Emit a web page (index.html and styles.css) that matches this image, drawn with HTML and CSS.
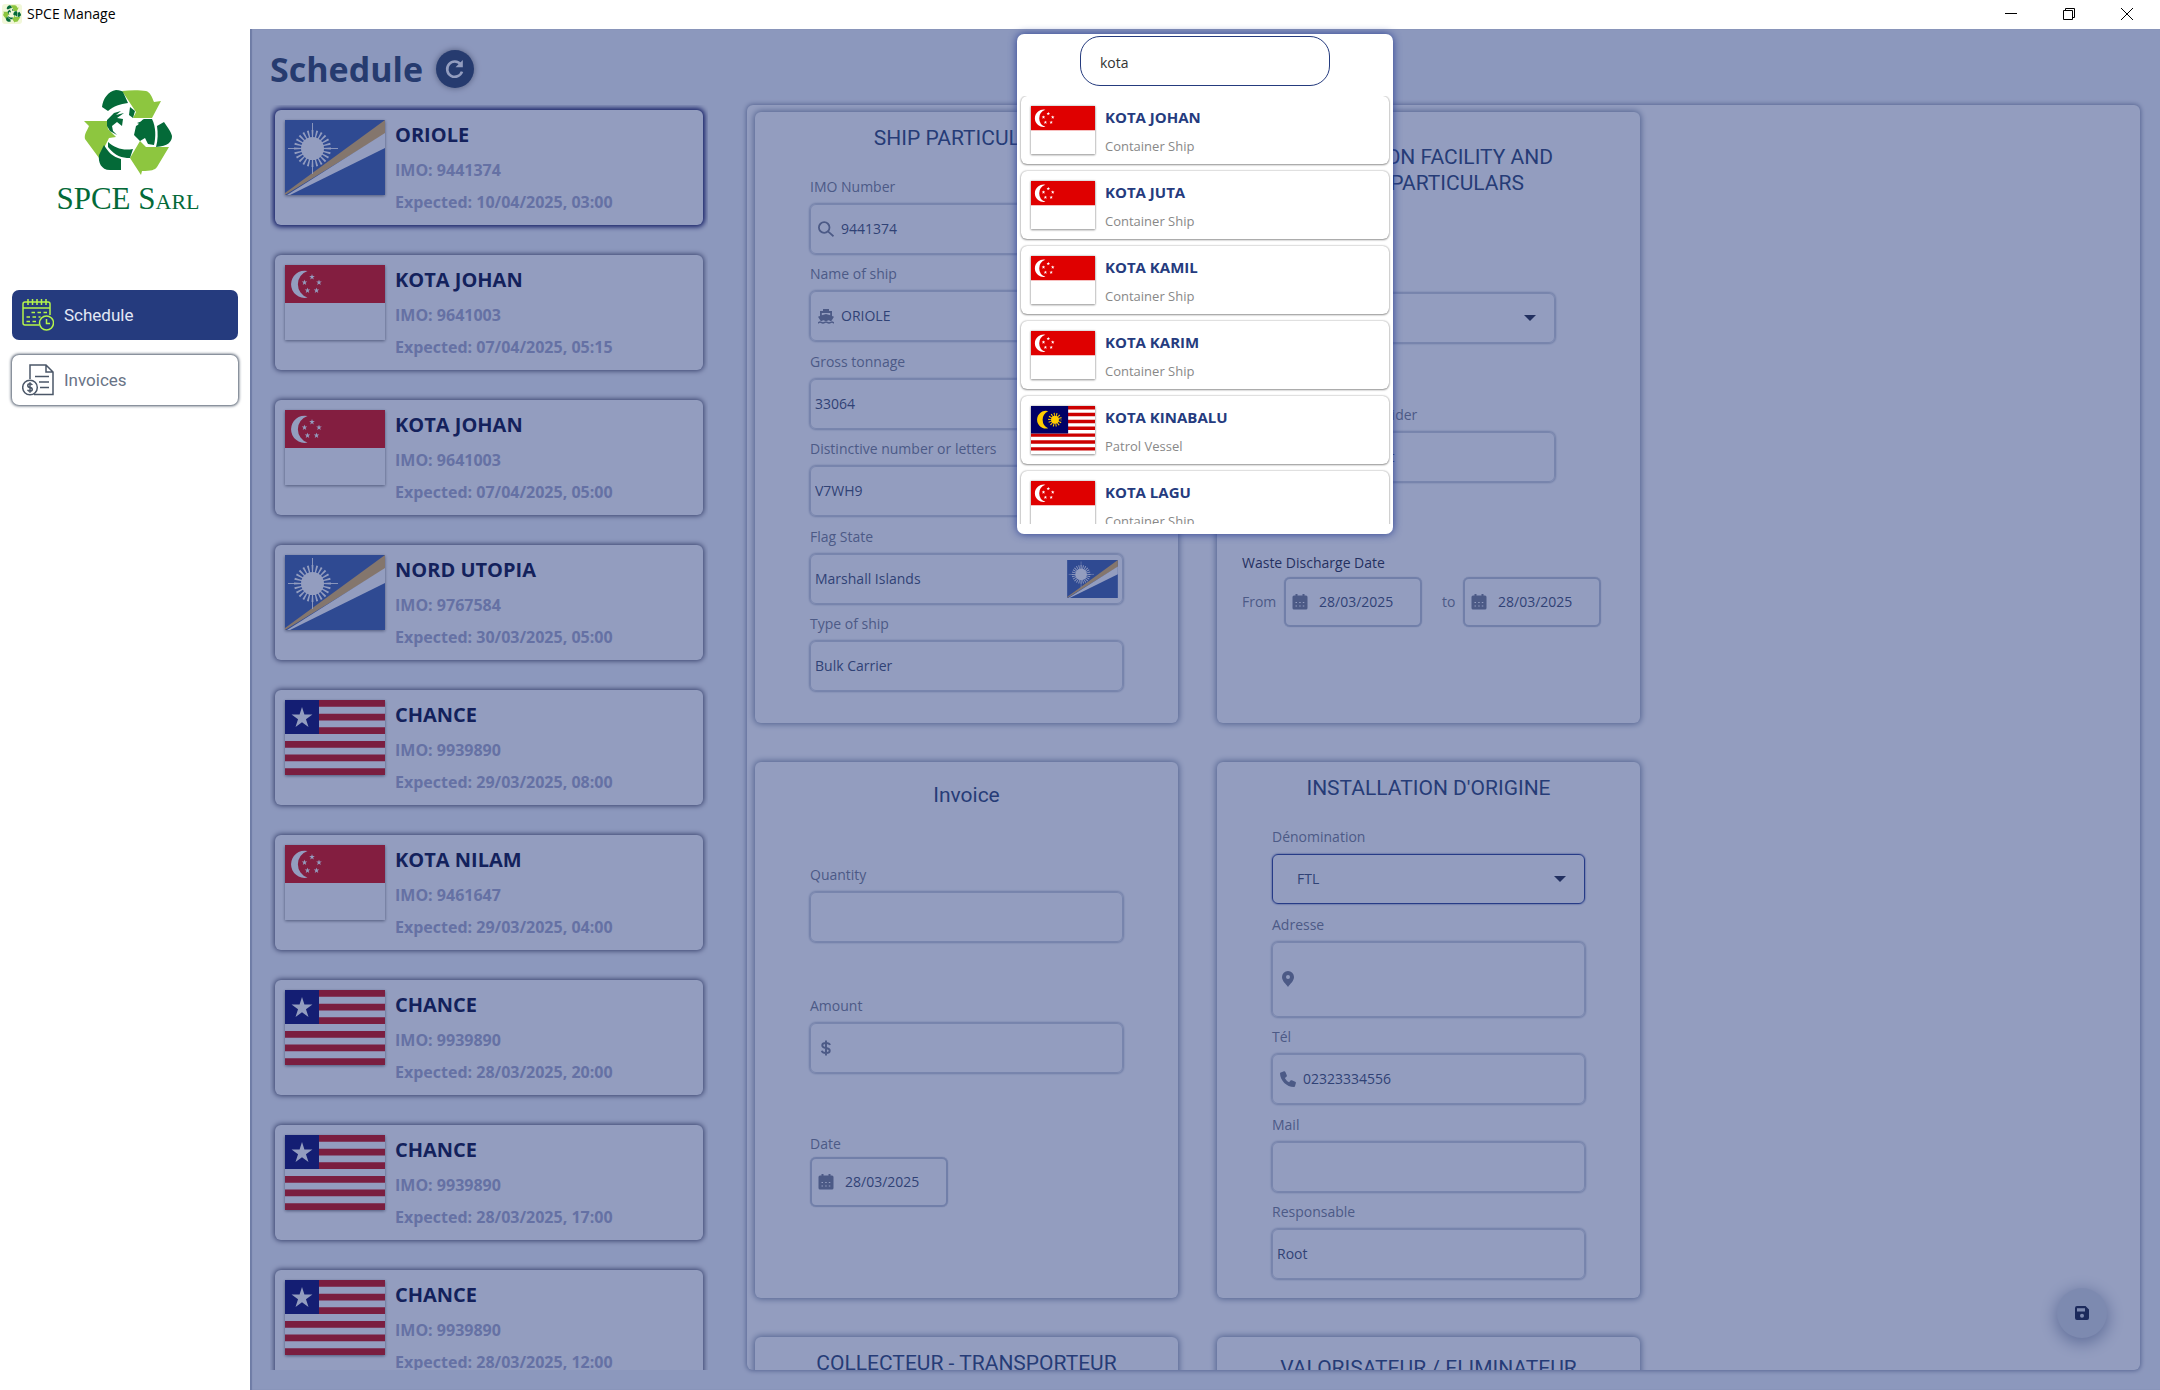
FILE: index.html
```html
<!DOCTYPE html>
<html lang="en">
<head>
<meta charset="utf-8">
<title>SPCE Manage</title>
<link rel="stylesheet" href="styles.css">
</head>
<body>
<svg class="defs" aria-hidden="true">
  <symbol id="star" viewBox="-10 -10 20 20"><path d="M0-10 2.2-3.1 9.5-3.1 3.6 1.2 5.9 8.1 0 3.8-5.9 8.1-3.6 1.2-9.5-3.1-2.2-3.1z"/></symbol>
  <symbol id="flag-sg" viewBox="0 0 100 75">
    <path fill="#fff" d="M0 0h100v75H0z"/><path fill="#df0000" d="M0 0h100v38H0z"/>
    <g fill="#fff"><path d="M22.500 6A13.600 13.600 0 1 0 22.500 32.600 14 14 0 0 1 22.500 6z"/>
    <use href="#star" x="24" y="9" width="6" height="6"/><use href="#star" x="16.500" y="14.500" width="6" height="6"/><use href="#star" x="31" y="14.500" width="6" height="6"/><use href="#star" x="19.500" y="22.500" width="6" height="6"/><use href="#star" x="28.500" y="22.500" width="6" height="6"/></g>
  </symbol>
  <symbol id="flag-mh" viewBox="0 0 100 75">
    <path fill="#3758a5" d="M0 0h100v75H0z"/><path fill="#e1b05b" d="M0 73 100 0v14L0 75z"/><path fill="#fff" d="M2 75 100 13v15L5 75z"/>
    <g fill="none" stroke="#fff"><circle cx="27.500" cy="28.500" r="14.500" stroke-width="8" pathLength="48" stroke-dasharray=".8 1.200" stroke-dashoffset=".4"/><path stroke-width=".9" d="M27.500 3v51M3 28.500h50"/></g><circle cx="27.500" cy="28.500" r="11.500" fill="#fff"/>
  </symbol>
  <symbol id="flag-lr" viewBox="0 0 100 75">
    <path fill="#fff" d="M0 0h100v75H0z"/><path stroke="#c00" stroke-width="6.820" d="M0 3.410h100M0 17.050h100M0 30.680h100M0 44.320h100M0 57.950h100M0 71.590h100"/><path fill="#006" d="M0 0h34v34H0z"/><use href="#star" fill="#fff" x="5" y="7" width="24" height="22"/>
  </symbol>
  <symbol id="flag-my" viewBox="0 0 112 84">
    <path fill="#fff" d="M0 0h112v84H0z"/><path stroke="#c00" stroke-width="6" d="M0 3h112M0 15h112M0 27h112M0 39h112M0 51h112M0 63h112M0 75h112"/><path fill="#006" d="M0 0h65v48H0z"/>
    <path fill="#fc0" d="M30 9a15.500 15.500 0 1 0 0 30 16.500 16.500 0 0 1 0-30z"/><circle cx="42" cy="24" r="7" fill="#fc0"/><circle cx="42" cy="24" r="9" fill="none" stroke="#fc0" stroke-width="6" pathLength="28" stroke-dasharray=".8 1.200" stroke-dashoffset=".4"/>
  </symbol>
  <symbol id="i-cal" viewBox="0 0 16 16"><path fill-rule="evenodd" d="M2 1.500h1.500V0h2v1.500h5V0h2v1.500H14A1.500 1.500 0 0 1 15.500 3v2H.5V3A1.500 1.500 0 0 1 2 1.500zM.5 5h15v9a1.500 1.500 0 0 1-1.500 1.500H2A1.500 1.500 0 0 1 .5 14zM3.500 8v1H5V8zm3.700 0v1h1.500V8zm3.600 0v1h1.500V8zm-7.300 3.500v1H5v-1zm3.700 0v1h1.500v-1zm3.600 0v1h1.500v-1z"/></symbol>
  <symbol id="logo" viewBox="0 0 88 85">
    <g fill="#8dc63f"><path d="M38 1C46 0 56 0 62 1c4 1 6 6 8 11l7-1-9 17H49l3-6z"/><path d="M56 51l6 6h23L73 77c-2 3-6 4-15 4l-1 4-11-17z"/><path d="M0 31h23l1 8 8 8-7 1-10 20L1 49c-1-5 2-8 4-13z"/></g>
    <g fill="#046a38"><path d="M18 17C19 9 24 1 32 0c4 0 6 1 7 2l5 11c-8 1-14 3-20 8z"/><path d="M73 36l7-4c3 5 7 9 8 14 0 6-4 10-16 11 2-7 2-14 1-21z"/><path d="M20 55c4 7 9 12 17 14v11H26c-9 0-12-8-11-15z"/><path d="M52 36c4-2 5-6 8-7h8c4 8 4 18 2 26l-6-1-3-6-5 3-6-6z"/><path d="M24 52c7 6 15 9 25 7l-3 9c-8 0-15-2-22-11z"/><path d="M23 30l7-7 7-2-5 4 8-2-7 5 6 1-1 7-5-4-5 4 1 5 4 4-7-4-3-5z"/><path d="M46 17l5 4-2 7-4-3zM53 33l8-3-3 5z"/></g>
  </symbol>
</svg>

<header class="titlebar">
  <svg class="app-icon" viewBox="0 0 20 20"><rect width="20" height="20" rx="3" fill="#f1f7d8"/><g transform="translate(1 1) scale(.2)"><use href="#logo" width="90" height="90"/></g></svg>
  <span class="app-title">SPCE Manage</span>
  <button class="win" aria-label="Minimize"><svg width="12" height="12"><path d="M0 5.500h12"/></svg></button>
  <button class="win" aria-label="Restore"><svg width="12" height="12"><path d="M.5 2.500h9v9h-9zM2.500 2.500v-2h9v9h-2"/></svg></button>
  <button class="win" aria-label="Close"><svg width="12" height="12"><path d="M0 0l12 12M12 0 0 12"/></svg></button>
</header>

<div class="app">
  <aside class="sidebar">
    <div class="brand"><svg class="brand-mark"><use href="#logo"/></svg><span class="brand-name">SPCE Sarl</span></div>
    <nav class="nav">
      <a class="nav-item active" href="#schedule">
        <svg viewBox="0 0 32 32" fill="none" stroke="#b5f54a" stroke-width="1.500"><path d="M17 26H3a2 2 0 0 1-2-2V5a2 2 0 0 1 2-2h23a2 2 0 0 1 2 2v11M1 9h27M6 0v6M10.500 0v6M15 0v6M19.500 0v6M24 0v6"/><path stroke-dasharray="3.500 2.500" d="M9.500 13.500h16M4.500 18h14M4.500 22.500h11"/><circle cx="24.500" cy="24" r="7"/><path d="M24.500 20v4.500H28"/></svg>
        Schedule</a>
      <a class="nav-item" href="#invoices">
        <svg viewBox="0 0 32 32" fill="none" stroke="#4b5768" stroke-width="1.500"><path d="M8 15V1h16l7 7v22.500H12M24 1v7h7M13 12.500h14M17 18h10M18 23.500h9"/><circle cx="8" cy="23.500" r="7.300"/><path d="M10.300 21c-.5-1-1.300-1.200-2.300-1.200-3 0-3 3.400 0 3.700s3 3.700 0 3.700c-1.200 0-2-.4-2.400-1.400M8 18.300v10.400"/></svg>
        Invoices</a>
    </nav>
  </aside>

  <main class="main">
    <div class="heading"><h1>Schedule</h1>
      <button class="refresh" aria-label="Refresh"><svg viewBox="0 0 20 20"><path d="M15.800 5.500A7.600 7.600 0 1 0 17 12.600" fill="none" stroke="#fff" stroke-width="2.600"/><path d="M17.800 1v7.300h-7.300z" fill="#fff"/></svg></button>
    </div>
    <div class="content">
      <section class="ships">
        <article class="ship selected"><svg class="flag"><use href="#flag-mh"/></svg><div><h2>ORIOLE</h2><p>IMO: 9441374</p><p>Expected: 10/04/2025, 03:00</p></div></article>
        <article class="ship"><svg class="flag"><use href="#flag-sg"/></svg><div><h2>KOTA JOHAN</h2><p>IMO: 9641003</p><p>Expected: 07/04/2025, 05:15</p></div></article>
        <article class="ship"><svg class="flag"><use href="#flag-sg"/></svg><div><h2>KOTA JOHAN</h2><p>IMO: 9641003</p><p>Expected: 07/04/2025, 05:00</p></div></article>
        <article class="ship"><svg class="flag"><use href="#flag-mh"/></svg><div><h2>NORD UTOPIA</h2><p>IMO: 9767584</p><p>Expected: 30/03/2025, 05:00</p></div></article>
        <article class="ship"><svg class="flag"><use href="#flag-lr"/></svg><div><h2>CHANCE</h2><p>IMO: 9939890</p><p>Expected: 29/03/2025, 08:00</p></div></article>
        <article class="ship"><svg class="flag"><use href="#flag-sg"/></svg><div><h2>KOTA NILAM</h2><p>IMO: 9461647</p><p>Expected: 29/03/2025, 04:00</p></div></article>
        <article class="ship"><svg class="flag"><use href="#flag-lr"/></svg><div><h2>CHANCE</h2><p>IMO: 9939890</p><p>Expected: 28/03/2025, 20:00</p></div></article>
        <article class="ship"><svg class="flag"><use href="#flag-lr"/></svg><div><h2>CHANCE</h2><p>IMO: 9939890</p><p>Expected: 28/03/2025, 17:00</p></div></article>
        <article class="ship"><svg class="flag"><use href="#flag-lr"/></svg><div><h2>CHANCE</h2><p>IMO: 9939890</p><p>Expected: 28/03/2025, 12:00</p></div></article>
      </section>

      <form class="panel">
        <section class="card tall">
          <h3>SHIP PARTICULARS</h3>
          <div class="fields">
            <div class="field"><label for="imo">IMO Number</label><div class="control icon"><svg viewBox="0 0 16 16"><path fill="none" stroke="currentColor" stroke-width="1.800" d="M11.500 6.500a5.300 5.300 0 1 1-10.600 0 5.300 5.300 0 0 1 10.600 0zM10 10.300l5.500 5"/></svg><input id="imo" value="9441374"></div></div>
            <div class="field"><label for="name">Name of ship</label><div class="control icon"><svg viewBox="1 0 16 16"><path d="M6 1h6v2h3v5l2 .8-2.500 4c-1 .6-2-.6-3-.6s-1.500.8-2.500.8-1.500-.8-2.500-.8-2 1.200-3 .6L1 8.800 3 8V3h3zM4.800 5v2.300L9 6l4.200 1.300V5z"/><path d="M0 15c2 0 2-1 3-1s1.500 1 3 1 2-1 3-1 1.500 1 3 1 2-1 3-1 1 1 3 1" fill="none" stroke="currentColor" stroke-width="1.300"/></svg><input id="name" value="ORIOLE"></div></div>
            <div class="field"><label for="gross">Gross tonnage</label><div class="control"><input id="gross" value="33064"></div></div>
            <div class="field"><label for="letters">Distinctive number or letters</label><div class="control"><input id="letters" value="V7WH9"></div></div>
            <div class="field"><label for="flag">Flag State</label><div class="control"><input id="flag" value="Marshall Islands"><svg class="flag-mini"><use href="#flag-mh"/></svg></div></div>
            <div class="field"><label for="type">Type of ship</label><div class="control"><input id="type" value="Bulk Carrier"></div></div>
          </div>
        </section>

        <section class="card facility">
          <h3>RECEPTION FACILITY AND PORT PARTICULARS</h3>
          <div class="fields">
            <div class="field"><label for="port">Location</label><div class="control select"><select id="port"><option>Port</option></select><svg class="caret" viewBox="0 0 12 6"><path d="M0 0h12L6 6z"/></svg></div></div>
            <div class="field"><label for="provider">Treatment Facility Provider</label><div class="control"><input id="provider" value="Waste treatment unit t"></div></div>
            <fieldset class="dates"><legend>Waste Discharge Date</legend>
              <div class="range">
                <label for="from">From</label><div class="control date"><svg><use href="#i-cal"/></svg><input id="from" value="28/03/2025"></div>
                <label class="to" for="to">to</label><div class="control date"><svg><use href="#i-cal"/></svg><input id="to" value="28/03/2025"></div>
              </div>
            </fieldset>
          </div>
        </section>

        <section class="card invoice">
          <h3>Invoice</h3>
          <div class="fields">
            <div class="field"><label for="qty">Quantity</label><div class="control"><input id="qty"></div></div>
            <div class="field"><label for="amount">Amount</label><div class="control icon"><svg viewBox="0 0 16 16"><path fill="none" stroke="currentColor" stroke-width="1.900" d="M12 5C11.500 3.500 10 3 8 3 3 3 3 7.300 8 8s5 5 0 5c-2 0-3.800-.5-4.200-2.300M8 .5v15"/></svg><input id="amount"></div></div>
            <div class="field date-field"><label for="idate">Date</label><div class="control date"><svg><use href="#i-cal"/></svg><input id="idate" value="28/03/2025"></div></div>
          </div>
        </section>

        <section class="card origin">
          <h3>INSTALLATION D'ORIGINE</h3>
          <div class="fields">
            <div class="field"><label for="denom">Dénomination</label><div class="control select focus"><select id="denom"><option>FTL</option></select><svg class="caret" viewBox="0 0 12 6"><path d="M0 0h12L6 6z"/></svg></div></div>
            <div class="field"><label for="addr">Adresse</label><div class="control icon area"><svg viewBox="0 0 16 16"><path fill-rule="evenodd" d="M8 0a6 6 0 0 1 6 6c0 4-4 7-6 10-2-3-6-6-6-10a6 6 0 0 1 6-6zm0 4a2 2 0 1 0 0 4 2 2 0 0 0 0-4z"/></svg><textarea id="addr" rows="1"></textarea></div></div>
            <div class="field"><label for="tel">Tél</label><div class="control icon"><svg viewBox="0 0 16 16"><path d="M.8 1.500 4 .3c.6-.2 1.200.1 1.400.6l1.400 3.400c.2.500.1 1-.3 1.400L4.900 7.100c1 2 2.200 3.200 4.200 4.200l1.400-1.700c.4-.4.9-.5 1.400-.3l3.300 1.400c.6.200.8.800.7 1.400L15 15.300c-.1.400-.5.700-1 .7C6.500 15.800.2 9.500 0 2.400c0-.4.300-.8.800-.9z"/></svg><input id="tel" value="02323334556"></div></div>
            <div class="field"><label for="mail">Mail</label><div class="control"><input id="mail"></div></div>
            <div class="field"><label for="resp">Responsable</label><div class="control"><input id="resp" value="Root"></div></div>
          </div>
        </section>

        <section class="card"><h3>COLLECTEUR - TRANSPORTEUR</h3></section>
        <section class="card lower"><h3>VALORISATEUR / ELIMINATEUR</h3></section>
      </form>
    </div>
    <button class="save" aria-label="Save"><svg viewBox="0 0 14 14"><path fill-rule="evenodd" d="M2 0h8.500L14 3.500V12a2 2 0 0 1-2 2H2a2 2 0 0 1-2-2V2a2 2 0 0 1 2-2zm0 2.200v3.300h8V2.200zM7 7.800a2 2 0 1 0 0 4 2 2 0 0 0 0-4z"/></svg></button>

    <div class="overlay"></div>
    <div class="popup" role="dialog" aria-label="Ship search">
      <input class="search" aria-label="Search" value="kota">
      <div class="results">
        <button class="result"><svg><use href="#flag-sg"/></svg><span><b>KOTA JOHAN</b><small>Container Ship</small></span></button>
        <button class="result"><svg><use href="#flag-sg"/></svg><span><b>KOTA JUTA</b><small>Container Ship</small></span></button>
        <button class="result"><svg><use href="#flag-sg"/></svg><span><b>KOTA KAMIL</b><small>Container Ship</small></span></button>
        <button class="result"><svg><use href="#flag-sg"/></svg><span><b>KOTA KARIM</b><small>Container Ship</small></span></button>
        <button class="result"><svg><use href="#flag-my"/></svg><span><b>KOTA KINABALU</b><small>Patrol Vessel</small></span></button>
        <button class="result"><svg><use href="#flag-sg"/></svg><span><b>KOTA LAGU</b><small>Container Ship</small></span></button>
      </div>
    </div>
  </main>
</div>
</body>
</html>
```
FILE: styles.css
```css
* { box-sizing: border-box; margin: 0; padding: 0; }
body { height: 100vh; display: flex; flex-direction: column; overflow: hidden; background: #fff; font: 14px/20px "Open Sans", "Noto Sans", sans-serif; color: #39486b; }
button, input, select, textarea { font: inherit; color: inherit; border: 0; background: none; outline: 0; }
svg { flex: none; display: block; }
.defs { position: absolute; width: 0; height: 0; }

.titlebar { flex: none; height: 29px; display: flex; align-items: center; padding: 0 4px 1px 2px; color: #000; }
.app-icon { width: 20px; height: 20px; }
.app-title { flex: 1; padding-left: 5px; }
.win { width: 58px; height: 28px; display: grid; place-items: center; }
.win svg { fill: none; stroke: #000; }

.app { flex: 1; min-height: 0; display: flex; }
.sidebar { flex: none; width: 250px; padding: 61px 12px 0; }
.brand { height: 200px; display: flex; flex-direction: column; align-items: center; gap: 3px; padding-left: 6px; }
.brand-mark { width: 88px; height: 85px; }
.brand-name { font: 31px/42px "Liberation Serif", serif; font-variant: small-caps; color: #046a38; white-space: nowrap; }
.nav { display: flex; flex-direction: column; gap: 15px; }
.nav-item { height: 50px; padding: 0 10px; display: flex; align-items: center; gap: 10px; border-radius: 7px; font: 17px/24px Roboto, sans-serif; color: #697386; text-decoration: none; box-shadow: 0 0 3px 1px #4b5768; }
.nav-item svg { width: 32px; height: 32px; }
.nav-item.active { background: #253b7e; color: #e3e8f5; box-shadow: none; }

.main { flex: 1; min-width: 0; position: relative; display: flex; flex-direction: column; padding: 0 20px 20px; background: #f1f4fa; box-shadow: inset 2px 0 1px #b5bccb; }
.heading { flex: none; height: 76px; display: flex; align-items: center; gap: 13px; padding-top: 4px; }
h1 { font-size: 34px; line-height: 44px; color: #253a5e; }
.refresh { width: 38px; height: 38px; border-radius: 50%; background: #253a5e; box-shadow: 0 0 6px #777; display: grid; place-items: center; }
.refresh svg { width: 20px; height: 20px; }
.content { flex: 1; min-height: 0; display: flex; gap: 39px; }

.ships { flex: none; width: 438px; padding: 5px; display: flex; flex-direction: column; gap: 30px; overflow: hidden; }
.ship { flex: none; height: 115px; padding: 10px; display: flex; gap: 10px; border-radius: 6px; background: #fff; box-shadow: 0 0 5px 1px #4a4a5c; }
.ship.selected { box-shadow: 0 0 5px 2px #00004a; }
.flag { width: 100px; height: 75px; box-shadow: 0 1px 3px #777; }
.ship h2 { font-size: 20px; line-height: 30px; color: #000639; }
.ship p { font-size: 16px; line-height: 32px; font-weight: 700; color: #a3a6c8; }
.ship h2 + p { padding-top: 4px; }

.panel { flex: 1; min-width: 0; padding: 7px 8px; display: grid; grid-template-columns: repeat(2, minmax(0, 423px)); grid-auto-rows: max-content; gap: 39px; overflow: hidden; background: #fff; border-radius: 6px; box-shadow: 0 0 4px 1px #8a93a8; }
.card { display: flex; flex-direction: column; align-items: center; padding: 13px 54px 19px; border-radius: 6px; background: #fff; box-shadow: 0 0 6px 1px #7a869e; min-height: 536px; }
.card.tall { min-height: 611px; padding-bottom: 32px; }
.card h3 { font: 21px/26px Roboto, sans-serif; color: #253c6e; text-align: center; }
.fields { flex: 1; width: 100%; max-width: 313px; padding-top: 26px; display: flex; flex-direction: column; justify-content: space-between; }
.field { display: flex; flex-direction: column; gap: 7px; }
label { color: #71788d; }
.control { height: 50px; display: flex; align-items: center; padding: 0 4px; border: 1px solid #c9cfdb; border-radius: 6px; box-shadow: 0 0 2px 1px #b4bccb; color: #39486b; }
.control input, .control textarea, .control select { flex: 1; min-width: 0; width: 100%; }
.control textarea { resize: none; }
.control.icon { padding-left: 7px; gap: 7px; }
.control svg { width: 16px; height: 16px; fill: currentColor; color: #71788d; }
.control.area { height: 75px; }
.control .flag-mini { width: 51px; height: 38px; }
.control.select { padding: 0 18px 0 24px; }
.control select { appearance: none; }
.control .caret { width: 12px; height: 6px; fill: #1d2440; }
.control.focus { border-color: #253b8e; box-shadow: 0 0 2px #253b8e; }
.control.date { width: 138px; padding-left: 6px; gap: 11px; border-width: 2px; border-color: #bac2d2; box-shadow: 0 0 1px #8a93a8; }

.facility { padding: 32px 25px; }
.facility h3 { max-width: 300px; }
.facility .fields { max-width: none; justify-content: flex-start; gap: 62px; padding-top: 70px; }
.facility .field { width: 313px; }
.dates { border: 0; margin-top: 9px; padding-top: 4px; }
.dates legend { color: #1d2440; }
.range { display: flex; align-items: center; }
.range label { width: 42px; }
.range .to { width: 41px; padding-left: 20px; }

.invoice { padding-top: 20px; }
.invoice .fields { justify-content: flex-start; gap: 54px; padding-top: 57px; }
.date-field { padding-top: 7px; gap: 3px; }
.lower { padding-top: 18px; }

.save { position: absolute; right: 53px; bottom: 52px; width: 50px; height: 50px; border-radius: 50%; background: #d3d8e0; box-shadow: 0 4px 18px #8a93a8; display: grid; place-items: center; }
.save svg { width: 14px; height: 14px; fill: #101838; }

.overlay { position: absolute; inset: 0; background: rgba(39, 60, 127, .5); }
.popup { position: absolute; top: 5px; left: 50%; transform: translateX(-50%); width: 376px; height: 500px; padding: 2px 0 10px; display: flex; flex-direction: column; align-items: center; gap: 10px; border-radius: 7px; background: #fff; box-shadow: 0 0 8px #2a3f94; }
.search { flex: none; width: 250px; height: 50px; padding: 2px 19px 0; border: 1px solid #253b7e; border-radius: 20px; color: #333; }
.results { flex: 1; min-height: 0; width: 100%; padding: 0 4px; display: flex; flex-direction: column; gap: 7px; overflow: hidden; }
.result { flex: none; height: 68px; padding: 10px; display: flex; gap: 10px; text-align: left; border-radius: 6px; box-shadow: 0 0 2px #999, 0 1px 2px #999; }
.result svg { width: 64px; height: 48px; box-shadow: 0 0 2px #aaa, 0 1px 2px #999; }
.result b { display: block; font-size: 15px; line-height: 22px; color: #253b7e; }
.result small { display: block; font-size: 13px; line-height: 36px; color: #888; }
```
